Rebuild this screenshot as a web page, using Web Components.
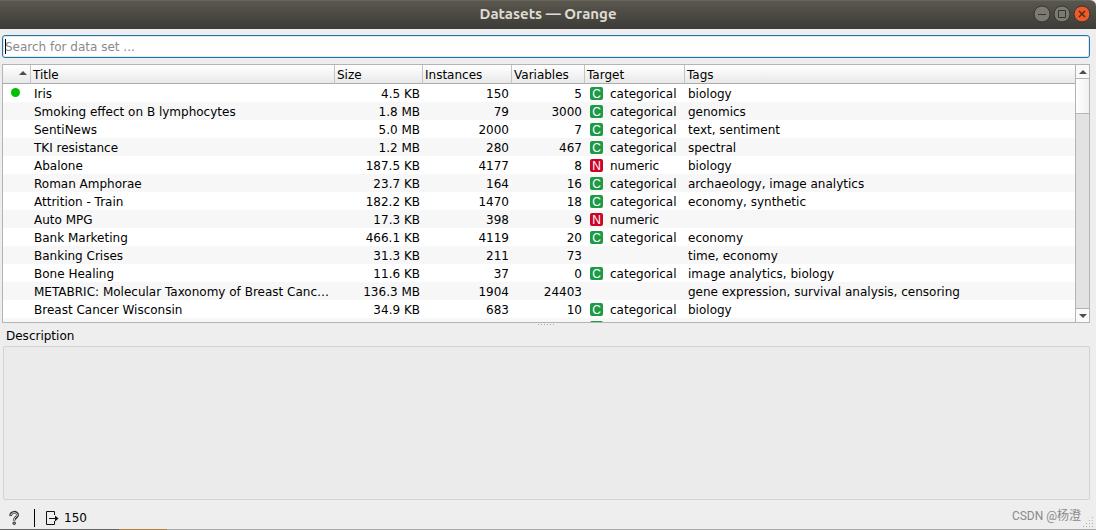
<!DOCTYPE html>
<html lang="en">
<head>
<meta charset="utf-8">
<title>Datasets — Orange</title>
<style>
html, body { height: 100%; margin: 0; }
body { background: #eeeeee; color: #000; font: 12px/18px "DejaVu Sans", "Noto Sans CJK SC", sans-serif; overflow: hidden; }
</style>
</head>
<body>
<datasets-window></datasets-window>
<script>
const define = (name, html, setup) => {
  const template = document.createElement('template');
  template.innerHTML = html;
  customElements.define(name, class extends HTMLElement {
    constructor() {
      super();
      this.attachShadow({ mode: 'open' }).append(template.content.cloneNode(true));
    }
    connectedCallback() { if (setup) setup(this, this.shadowRoot); }
  });
};

define('title-bar', `
<style>
:host { display: grid; grid-template-columns: 1fr auto 1fr; align-items: center; height: 29px; box-sizing: border-box; padding-bottom: 2px;
  background: linear-gradient(#59574e, #3c3b37); border-top: 1px solid #68665a; border-radius: 0 6px 0 0; }
h1 { grid-column: 2; margin: 0; font: bold 15px/20px Ubuntu, "Noto Sans", sans-serif; color: #dfdbd2; }
div { display: flex; justify-content: flex-end; gap: 2px; padding-right: 5px; }
button { all: unset; display: block; width: 18px; height: 18px; }
svg { display: block; }
</style>
<h1><slot></slot></h1>
<div>
  <button aria-label="Minimize"><svg width="18" height="18" viewBox="0 0 18 18"><circle cx="9" cy="9" r="8" fill="#7b7a73" stroke="#36352f"/><path d="M5 9.5h8" stroke="#35342f"/></svg></button>
  <button aria-label="Maximize"><svg width="18" height="18" viewBox="0 0 18 18"><circle cx="9" cy="9" r="8" fill="#7b7a73" stroke="#36352f"/><path d="M5.5 5.5h7v7h-7z" fill="none" stroke="#35342f"/></svg></button>
  <button aria-label="Close"><svg width="18" height="18" viewBox="0 0 18 18"><circle cx="9" cy="9" r="8" fill="#ec5b29" stroke="#36352f"/><path d="M6 6l6 6M12 6l-6 6" stroke="#4b2a18" stroke-width="1.4"/></svg></button>
</div>`);

define('search-box', `
<style>
:host { display: block; }
input { display: block; box-sizing: border-box; width: 100%; height: 23px; margin: 0; padding: 0 2px; border: 1px solid #2673a3;
  border-radius: 3px; outline: 0; background: #fff; box-shadow: inset 0 0 0 1px #dce9f1; font: inherit; color: #000; }
input::placeholder { color: #8a8a8a; opacity: 1; }
label { position: relative; display: block; }
/* text cursor */
label::after { content: ""; position: absolute; left: 3px; top: 4px; width: 1px; height: 15px; background: #000; }
</style>
<label><input type="text" aria-label="Search for data set" placeholder="Search for data set ..."></label>`);

define('type-badge', `
<style>
:host { display: block; width: 13px; height: 13px; border-radius: 2px; background: #1d9a45; color: #fff;
  font: 12px/14px "Liberation Sans", sans-serif; text-align: center; }
:host([kind="N"]) { background: #cc0426; }
</style><slot></slot>`);

define('scroll-bar', `
<style>
:host { display: flex; flex-direction: column; box-sizing: border-box; width: 14px; border-left: 1px solid #b4b4b4; background: #e2e2e2; }
button { all: unset; display: grid; place-items: center; height: 13px; background: #fafafa; }
.up, .thumb { border-bottom: 1px solid #b4b4b4; }
.thumb { height: 34px; background: linear-gradient(90deg, #fff, #f0f0f0); }
.down { margin-top: auto; border-top: 1px solid #b4b4b4; }
</style>
<button class="up" aria-label="Scroll up"><svg width="8" height="4"><path d="M0 4L4 0L8 4z" fill="#4d4d4d"/></svg></button>
<div class="thumb"></div>
<button class="down" aria-label="Scroll down"><svg width="8" height="4"><path d="M0 0L4 4L8 0z" fill="#4d4d4d"/></svg></button>`);

const datasets = [
  ['Iris', '4.5 KB', 150, 5, 'C', 'biology'],
  ['Smoking effect on B lymphocytes', '1.8 MB', 79, 3000, 'C', 'genomics'],
  ['SentiNews', '5.0 MB', 2000, 7, 'C', 'text, sentiment'],
  ['TKI resistance', '1.2 MB', 280, 467, 'C', 'spectral'],
  ['Abalone', '187.5 KB', 4177, 8, 'N', 'biology'],
  ['Roman Amphorae', '23.7 KB', 164, 16, 'C', 'archaeology, image analytics'],
  ['Attrition - Train', '182.2 KB', 1470, 18, 'C', 'economy, synthetic'],
  ['Auto MPG', '17.3 KB', 398, 9, 'N', ''],
  ['Bank Marketing', '466.1 KB', 4119, 20, 'C', 'economy'],
  ['Banking Crises', '31.3 KB', 211, 73, '', 'time, economy'],
  ['Bone Healing', '11.6 KB', 37, 0, 'C', 'image analytics, biology'],
  ['METABRIC: Molecular Taxonomy of Breast Canc…', '136.3 MB', 1904, 24403, '', 'gene expression, survival analysis, censoring'],
  ['Breast Cancer Wisconsin', '34.9 KB', 683, 10, 'C', 'biology']
];
const kinds = { C: 'categorical', N: 'numeric' };

define('dataset-table', `
<style>
:host { display: flex; min-height: 0; overflow: hidden; border: 1px solid #b4b4b4; background: #fff; }
.view { flex: 1; min-width: 0; overflow: hidden; }
table { width: 100%; table-layout: fixed; border-spacing: 0; }
th, td { box-sizing: border-box; padding: 2px 3px 0; height: 18px; line-height: 16px; white-space: nowrap; overflow: hidden; text-align: left; font-weight: normal; }
th { height: 19px; padding: 2px 2px 0; background: linear-gradient(#fff, #e9e9e9); border-bottom: 1px solid #ababab; border-right: 1px solid #c4c4c4; }
th:last-child { border-right: 0; }
th:first-child { padding: 0 3px 2px; }
th svg { display: block; margin-left: auto; }
tbody tr:nth-child(even) { background: #f7f7f7; }
.num { text-align: right; }
.target { display: flex; gap: 7px; }
td.kindcell { padding: 2px 2px 0 5px; vertical-align: top; }
type-badge { margin-top: 1px; }
.dot { display: block; width: 9px; height: 9px; margin-left: 5px; border-radius: 50%; background: #00c000; }
td.first { padding-top: 0; padding-bottom: 2px; }
.mark { width: 28px; } .title { width: 304px; } .size { width: 88px; } .inst { width: 89px; } .vars { width: 73px; } .kind { width: 100px; }
</style>
<div class="view"><table>
<colgroup><col class="mark"><col class="title"><col class="size"><col class="inst"><col class="vars"><col class="kind"><col></colgroup>
<thead><tr><th aria-label="Downloaded"><svg width="8" height="4"><path d="M0 4L4 0L8 4z" fill="#4d4d4d"/></svg></th><th>Title</th><th>Size</th><th>Instances</th><th>Variables</th><th>Target</th><th>Tags</th></tr></thead>
<tbody></tbody></table></div>
<scroll-bar></scroll-bar>`, (host, root) => {
  const rows = datasets.map(([title, size, inst, vars, kind, tags], i) => `<tr>
    <td class="first">${i ? '' : '<span class="dot"></span>'}</td><td>${title}</td><td class="num">${size}</td><td class="num">${inst}</td><td class="num">${vars}</td>
    <td class="kindcell">${kind ? `<div class="target"><type-badge kind="${kind}">${kind}</type-badge>${kinds[kind]}</div>` : ''}</td><td>${tags}</td></tr>`);
  rows.push('<tr><td></td><td></td><td></td><td></td><td></td><td class="kindcell"><div class="target"><type-badge></type-badge></div></td><td></td></tr>');
  root.querySelector('tbody').innerHTML = rows.join('');
});

define('pane-splitter', `
<style>
:host { display: grid; place-items: start center; height: 4px; }
svg { display: block; }
</style>
<svg width="17" height="3"><path d="M0 1.5h17" stroke="#aaa" stroke-dasharray="1 2"/></svg>`);

define('description-pane', `
<style>
:host { display: flex; flex-direction: column; }
h2 { margin: 0 0 1px; padding-left: 4px; font: inherit; }
div { flex: 1; margin-left: 1px; border: 1px solid #d3d3d3; border-radius: 2px; background: #ebebeb; }
</style>
<h2><slot></slot></h2><div></div>`);

define('status-bar', `
<style>
:host { display: flex; align-items: center; box-sizing: border-box; height: 30px; padding: 6px 2px 0 7px; }
button { all: unset; display: block; }
svg { display: block; }
i { width: 1px; height: 18px; margin: 0 11px 0 12px; background: #000; }
output { margin-left: 5px; }
.credit { margin-left: auto; padding-bottom: 5px; color: #8a8a8a; font: 12px/18px Roboto, "Noto Sans CJK SC", sans-serif; }
.grip { align-self: flex-end; margin: 0 0 2px 2px; }
</style>
<button aria-label="Help"><svg width="15" height="16" viewBox="0 0 15 16"><path d="M3.800 6C3 1.200 10.800 1.200 10.600 5C10.500 7.500 7.200 7.400 7.200 10.600" fill="none" stroke="#333" stroke-width="2.800"/><path d="M3.900 5.200C4.200 1.900 10.500 2 10.300 5C10.100 7 7.200 7.200 7.200 10" fill="none" stroke="#eee" stroke-width="1"/><circle cx="7.200" cy="13.200" r="1.300" fill="#999" stroke="#333"/></svg></button>
<i></i>
<svg width="13" height="14" viewBox="0 0 13 14" fill="none" stroke="#111"><path d="M8.500 4V.5H.5v13h8V10M3 7.500h7"/><path d="M9 4.500L12.500 7.500L9 10.500z" fill="#111" stroke="none"/></svg>
<output>150</output>
<span class="credit">CSDN @杨澄</span>
<svg class="grip" width="11" height="11" fill="#b0b0b0"><path d="M9 0h1v1h-1zM6 3h1v1h-1zM9 3h1v1h-1zM3 6h1v1h-1zM6 6h1v1h-1zM9 6h1v1h-1zM0 9h1v1h-1zM3 9h1v1h-1zM6 9h1v1h-1zM9 9h1v1h-1z"/></svg>`);

define('datasets-window', `
<style>
:host { display: flex; flex-direction: column; height: 100vh; box-sizing: border-box; }
main { flex: 1; min-height: 0; display: flex; flex-direction: column; padding: 6px 6px 0 2px; }
search-box { margin-bottom: 6px; }
dataset-table { flex: 257 1 0; }
description-pane { flex: 173 1 0; }
footer { position: relative; }
/* sliver of the desktop below the window */
footer::after { content: ""; position: absolute; inset: auto 0 0 0; height: 1px;
  background: linear-gradient(90deg, #666 0 119px, #b08040 119px 167px, #aaa 167px); }
</style>
<title-bar>Datasets — Orange</title-bar>
<main>
  <search-box></search-box>
  <dataset-table></dataset-table>
  <pane-splitter></pane-splitter>
  <description-pane>Description</description-pane>
</main>
<footer><status-bar></status-bar></footer>`);
</script>
</body>
</html>
